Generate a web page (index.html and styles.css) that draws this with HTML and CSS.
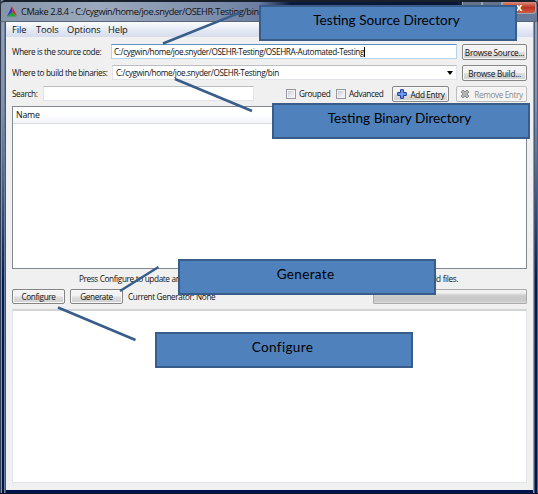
FILE: index.html
```html
<!DOCTYPE html>
<html lang="en">
<head>
<meta charset="utf-8">
<title>CMake 2.8.4</title>
<link rel="stylesheet" href="styles.css">
</head>
<body>
<div class="window">
  <header class="titlebar">
    <svg class="logo" viewBox="0 0 11 11"><path d="M5.3 0 6 6 0 11Z" fill="#2436d8"/><path d="M5.6 0 11 10.5 6.3 7Z" fill="#e02020"/><path d="M0 11 5.5 6.2 10.8 11Z" fill="#22a432"/></svg>
    <span class="title">CMake 2.8.4 - C:/cygwin/home/joe.snyder/OSEHR-Testing/bin</span>
    <div class="controls"><i></i><i></i><i class="close">x</i></div>
  </header>
  <main class="client">
    <nav class="menu"><span class="file">File</span><span class="tools">Tools</span><span class="options">Options</span><span>Help</span></nav>
    <div class="content">
      <div class="row">
        <label class="source-label">Where is the source code:</label>
        <div class="field focus"><span class="source-path">C:/cygwin/home/joe.snyder/OSEHR-Testing/OSEHRA-Automated-Testing</span><b class="caret"></b></div>
        <button class="browse browse-source">Browse Source...</button>
      </div>
      <div class="row">
        <label class="build-label">Where to build the binaries:</label>
        <div class="field combo"><span class="build-path">C:/cygwin/home/joe.snyder/OSEHR-Testing/bin</span><b class="arrow"></b></div>
        <button class="browse">Browse Build...</button>
      </div>
      <div class="row search-row">
        <label class="search-label">Search:</label>
        <div class="field search"></div>
        <span class="check grouped"><i></i>Grouped</span>
        <span class="check advanced"><i></i>Advanced</span>
        <button class="add"><svg viewBox="0 0 10 10"><path d="M3.5.7h3v2.8h2.8v3H6.5v2.8h-3V6.500H.7v-3h2.800Z" fill="#6e98ee" stroke="#1c3d9c"/></svg>Add Entry</button>
        <button class="remove"><svg viewBox="0 0 10 10"><path d="m1 3 2-2 2 2 2-2 2 2-2 2 2 2-2 2-2-2-2 2-2-2 2-2Z" fill="#b5b5b5" stroke="#8e8e8e"/></svg>Remove Entry</button>
      </div>
      <section class="table"><div class="table-head">Name</div></section>
      <p class="hint">Press Configure to update and display new values in red, then press Generate to generate selected build files.</p>
      <div class="row actions">
        <button>Configure</button><button>Generate</button>
        <span class="generator">Current Generator: None</span>
        <div class="progress"></div>
      </div>
      <section class="output"></section>
    </div>
  </main>
</div>
<svg class="leaders" viewBox="0 0 538 494"><path d="M163 43.500 240 12.700M175 79 252 111M120 291 158.500 267M58 307.500 135.500 340"/></svg>
<div class="callout c-source"><span>Testing Source Directory</span></div>
<div class="callout c-binary"><span>Testing Binary Directory</span></div>
<div class="callout c-generate"><span>Generate</span></div>
<div class="callout c-configure"><span>Configure</span></div>
</body>
</html>
```
FILE: styles.css
```css
* { box-sizing: border-box; }
body {
  margin: 0; width: 538px; height: 494px; overflow: hidden; position: relative;
  background: #0a1430; color: #111;
  font: 8.2px/12px "Open Sans", "Noto Sans", sans-serif;
  letter-spacing: -0.37px;
}
.window {
  height: 493px; margin: 0; padding: 0 5px 3px 6px;
  display: flex; flex-direction: column;
  background:
    linear-gradient(90deg, #333e52 0 1px, #8794a8 1px 2px, transparent 2px 4px, #6b7e9b 4px 5px, #465268 5px 6px, transparent 6px calc(100% - 5px), #8f9baa calc(100% - 5px) calc(100% - 4px), #465a78 calc(100% - 4px) calc(100% - 3px), transparent calc(100% - 3px) calc(100% - 1px), #55647d calc(100% - 1px)),
    linear-gradient(#98a7bd 0, #8393ad 100px, #5b7196 160px, #001c55 280px, #00134a 100%);
}
.titlebar {
  height: 22px; margin: 0 -5px 0 -6px; padding: 1px 1px 0 6px; flex: none; display: flex; align-items: flex-start;
  border: 1px solid #29313f; border-top: 2px solid #18202b; border-bottom-color: #58657b; border-radius: 5px 5px 0 0;
  background: linear-gradient(90deg, #8795aa, #9caabd 18%, #7c8dab 40%, #6c7fa2 48%, #0c1b3d 54%, #091634 85%, #65799a 93%);
}
.logo { width: 10px; height: 11px; margin: 3px 4px 0 0; }
.title { font-size: 9.2px; letter-spacing: -0.4px; line-height: 17px; white-space: nowrap; width: 237px; }
.controls { display: flex; margin-left: auto; margin-top: -1px; }
.controls i { width: 20px; height: 12px; border: 1px solid #9ca4b0; border-top: 0; background: #65738a; }
.controls .close { width: 34px; padding-left: 0; font: bold 11px/9px "Open Sans"; color: #fff; text-align: center; background: linear-gradient(#dc8d7e, #bb3324 50%, #d25a43); border-radius: 0 0 3px; }
.client { flex: 1; display: flex; flex-direction: column; background: #f0f0f0; }
.menu { height: 15px; flex: none; padding-left: 6px; display: flex; font-size: 9.3px; letter-spacing: -0.1px; line-height: 15px; background: linear-gradient(#fbfcfe, #e5eaf5 50%, #d6dcec); }
.menu span { white-space: nowrap; }
.file { width: 24px; }
.tools { width: 31px; }
.options { width: 41px; }
.content { flex: 1; display: flex; flex-direction: column; padding: 7px 6px 7px; }
.row { height: 16px; flex: none; display: flex; align-items: stretch; margin-bottom: 5px; line-height: 16px; white-space: nowrap; }
.source-label, .build-label { width: 99px; flex: none; }
.field { flex: 1; display: flex; align-items: center; height: 15px; background: #fff; border: 1px solid #e0e3e8; border-top-color: #babdc4; padding-left: 2px; line-height: 13px; }
.focus { border-color: #b5d3eb; border-top-color: #5c91c3; }
.combo { padding: 0 3px 0 3px; margin-left: 1px; }
.caret { width: 1px; height: 10px; background: #000; }
.arrow { margin-left: auto; border: 3px solid transparent; border-top: 4px solid #000; border-bottom: 0; }
button {
  width: 53px; height: 16px; padding: 0; flex: none; font: inherit; letter-spacing: inherit; line-height: 13px; color: #111; white-space: nowrap;
  border: 1px solid #858585; border-radius: 2px; background: linear-gradient(#f3f3f3 0 48%, #dedede 52%, #cfcfcf); box-shadow: inset 0 0 0 1px #f8f8f8;
  display: flex; align-items: center; justify-content: center;
}
.browse { width: 65px; margin-left: 5px; letter-spacing: -0.25px; }
.search-label { width: 31px; }
.search { flex: none; width: 211px; }
.check { display: flex; align-items: center; }
.check i { width: 10px; height: 10px; margin-right: 3px; border: 1px solid #969a9e; background: linear-gradient(135deg, #c5cad0, #fff); box-shadow: inset 0 0 0 1px #f4f4f4; }
.grouped { width: 50px; margin-left: 32px; }
.advanced { width: 56px; }
.add { width: 57px; }
.remove { width: 71px; margin-left: auto; color: #8a8a8a; border-color: #bcbcbc; background: #f4f4f4; }
button svg { width: 10px; height: 10px; margin-right: 4px; }
.table { height: 163px; flex: none; margin-top: -1px; border: 1px solid #828790; background: #fff; }
.table-head { height: 17px; padding-left: 3px; line-height: 17px; background: linear-gradient(#fff 45%, #f2f4f7); border-bottom: 1px solid #d8dce2; font-size: 8.8px; letter-spacing: -0.2px; }
.hint { margin: 4px 0 4px 67px; height: 12px; width: 379px; flex: none; white-space: nowrap; text-align-last: justify; }
.actions { height: 15px; line-height: 15px; }
.actions button { height: 15px; }
.actions button:nth-child(2) { margin-left: 5px; }
.generator { margin-left: 5px; }
.progress { width: 154px; height: 15px; margin-left: auto; border: 1px solid #aaa; border-radius: 1px; background: linear-gradient(#f0f0f0 0 20%, #cbcbcb 45%, #c8c8c8 80%, #dadada); }
.output { flex: 1; background: #fff; border: 1px solid #e0e3e8; border-top: 2px solid #d3d4d7; }
.leaders { position: absolute; left: 0; top: 0; width: 538px; height: 494px; fill: none; stroke: #385d8a; stroke-width: 2.5; }
.callout { position: absolute; width: 258px; height: 36px; padding-right: 3px; border: 2px solid #385d8a; background: #4f81bd; color: #000; text-align: center; font: 13.6px/26px Lato, "Open Sans", sans-serif; letter-spacing: 0; white-space: nowrap; }
.c-source { left: 259px; top: 5px; }
.c-binary { left: 272px; top: 103px; }
.c-generate { left: 178px; top: 259px; }
.c-configure { left: 155px; top: 332px; }
.c-generate, .c-configure { letter-spacing: 0.3px; }
```
